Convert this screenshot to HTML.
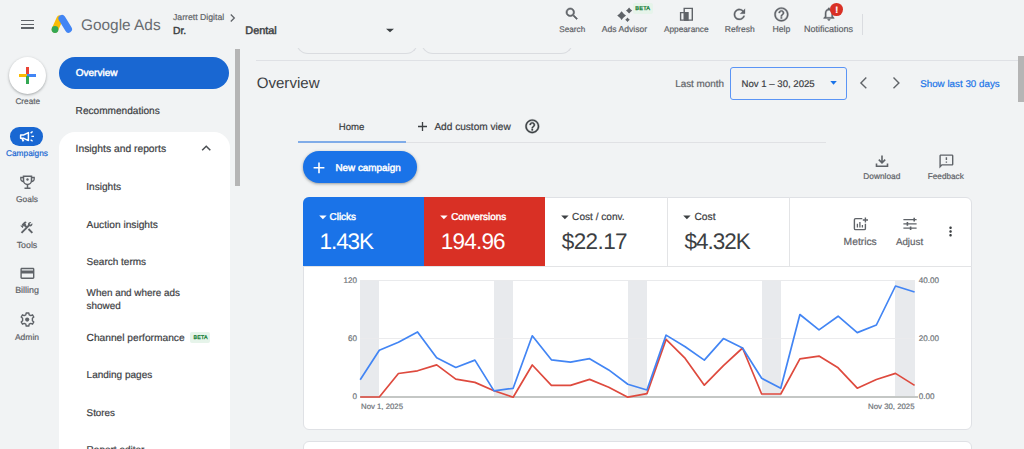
<!DOCTYPE html>
<html><head><meta charset="utf-8"><style>
html,body{margin:0;padding:0;}
body{width:1024px;height:449px;overflow:hidden;position:relative;background:#f1f3f4;font-family:"Liberation Sans",sans-serif;}
.t{position:absolute;white-space:nowrap;line-height:1;text-rendering:geometricPrecision;-webkit-text-stroke:0.2px currentColor;}
.b{position:absolute;}
</style></head><body>
<div class="b" style="left:296.2px;top:20px;width:121.8px;height:34px;border:1px solid #dadce0;border-top:none;border-radius:0 0 12px 12px;box-sizing:border-box;"></div>
<div class="b" style="left:421.2px;top:20px;width:151.5px;height:34px;border:1px solid #dadce0;border-top:none;border-radius:0 0 12px 12px;box-sizing:border-box;"></div>
<div class="b" style="left:0px;top:0px;width:1024px;height:48px;background:#f1f3f4;"></div>
<div class="b" style="left:256px;top:60.2px;width:762px;height:1.3px;background:#dfe1e5;"></div>
<div class="b" style="left:20.7px;top:19.6px;width:13px;height:1.4px;background:#5f6368;"></div>
<div class="b" style="left:20.7px;top:23.5px;width:13px;height:1.4px;background:#5f6368;"></div>
<div class="b" style="left:20.7px;top:27.3px;width:13px;height:1.4px;background:#5f6368;"></div>
<svg class="b" style="left:48px;top:10px" width="26" height="26" viewBox="0 0 26 26"><path d="M11.8 8.6 L7 19.4" stroke="#fbbc04" stroke-width="6.6" stroke-linecap="round"/>
<path d="M13.9 8.4 L20.5 19.2" stroke="#4285f4" stroke-width="7" stroke-linecap="round"/>
<circle cx="7" cy="19.5" r="3.4" fill="#34a853"/></svg>
<div class="t" style="left:81.00px;top:18.00px;font-size:15.4px;color:#686c70;-webkit-text-stroke:0;">Google Ads</div>
<div class="t" style="left:173.00px;top:13.00px;font-size:8.7px;color:#5f6368;">Jarrett Digital</div>
<svg class="b" style="left:229px;top:13px" width="8" height="10" viewBox="0 0 8 10"><path d="M1.8 1.5 L5.3 5 L1.8 8.5" fill="none" stroke="#5f6368" stroke-width="1.3"/></svg>
<div class="t" style="left:173.00px;top:27.00px;font-size:10.3px;color:#3c4043;-webkit-text-stroke:0.45px #3c4043;">Dr.</div>
<div class="t" style="left:245.30px;top:26.00px;font-size:10.9px;color:#3c4043;-webkit-text-stroke:0.45px #3c4043;">Dental</div>
<svg class="b" style="left:385px;top:28px" width="10" height="5" viewBox="0 0 10 5"><path d="M1 0.7 L9 0.7 L5 4.3 Z" fill="#3c4043"/></svg>
<svg class="b" style="left:564.00px;top:6.10px" width="15.84" height="15.84" viewBox="0 0 24 24"><path d="M15.5 14h-.79l-.28-.27A6.471 6.471 0 0 0 16 9.5 6.5 6.5 0 1 0 9.5 16c1.61 0 3.09-.59 4.23-1.57l.27.28v.79l5 4.99L20.49 19l-4.99-5zm-6 0C7.01 14 5 11.99 5 9.5S7.01 5 9.5 5 14 7.010 14 9.5 11.99 14 9.5 14z" fill="#5f6368" stroke="#5f6368" stroke-width="0.9"/></svg>
<div class="t" style="left:472.25px;width:200px;text-align:center;top:26.00px;font-size:8.2px;color:#5f6368;">Search</div>
<svg class="b" style="left:610px;top:0px" width="30" height="25" viewBox="0 0 30 25"><path d="M11.6 11.2 Q13.448 13.751999999999999 16.0 15.6 Q13.448 17.448 11.6 20.0 Q9.751999999999999 17.448 7.199999999999999 15.6 Q9.751999999999999 13.751999999999999 11.6 11.2 Z" fill="#5f6368"/><path d="M19.1 7.4 Q20.402 9.198 22.200000000000003 10.5 Q20.402 11.802 19.1 13.6 Q17.798000000000002 11.802 16.0 10.5 Q17.798000000000002 9.198 19.1 7.4 Z" fill="#5f6368"/><path d="M17.5 17.5 Q18.466 18.834 19.8 19.8 Q18.466 20.766000000000002 17.5 22.1 Q16.534 20.766000000000002 15.2 19.8 Q16.534 18.834 17.5 17.5 Z" fill="#5f6368"/></svg>
<div class="b" style="left:632.7px;top:3.1px;width:20.3px;height:10.5px;background:#e6f4ea;border-radius:2px;"></div>
<div class="t" style="left:542.80px;width:200px;text-align:center;top:7.00px;font-size:5.6px;color:#188038;letter-spacing:0.2px;-webkit-text-stroke:0.3px #188038;">BETA</div>
<div class="t" style="left:524.50px;width:200px;text-align:center;top:25.00px;font-size:8.6px;color:#5f6368;">Ads Advisor</div>
<svg class="b" style="left:679px;top:7px" width="16" height="16" viewBox="0 0 16 16"><path d="M1.6 5.6 L5.2 5.6 L5.2 13.1 L1.6 13.1 Z M5.2 1.4 L13.3 1.4 L13.3 13.1 L5.2 13.1 Z" fill="none" stroke="#5f6368" stroke-width="1.4"/><rect x="5" y="5" width="4.7" height="8.8" fill="#5f6368"/></svg>
<div class="t" style="left:586.25px;width:200px;text-align:center;top:25.00px;font-size:8.3px;color:#5f6368;">Appearance</div>
<svg class="b" style="left:731.40px;top:5.70px" width="16.80" height="16.80" viewBox="0 0 24 24"><path d="M17.65 6.35A7.958 7.958 0 0 0 12 4c-4.42 0-7.99 3.58-7.99 8s3.57 8 7.99 8c3.73 0 6.84-2.55 7.73-6h-2.08A5.99 5.99 0 0 1 12 18c-3.31 0-6-2.690-6-6s2.69-6 6-6c1.66 0 3.14.69 4.22 1.78L13 11h7V4l-2.35 2.350z" fill="#5f6368" stroke="#5f6368" stroke-width="0.4"/></svg>
<div class="t" style="left:639.75px;width:200px;text-align:center;top:25.00px;font-size:8.5px;color:#5f6368;">Refresh</div>
<svg class="b" style="left:773.10px;top:6.20px" width="16.80" height="16.80" viewBox="0 0 24 24"><path d="M11 18h2v-2h-2v2zm1-16C6.48 2 2 6.48 2 12s4.48 10 10 10 10-4.48 10-10S17.52 2 12 2zm0 18c-4.41 0-8-3.59-8-8s3.59-8 8-8 8 3.59 8 8-3.59 8-8 8zm0-14c-2.21 0-4 1.79-4 4h2c0-1.1.9-2 2-2s2 .9 2 2c0 2-3 1.75-3 5h2c0-2.25 3-2.5 3-5 0-2.21-1.79-4-4-4z" fill="#5f6368" stroke="#5f6368" stroke-width="0.5"/></svg>
<div class="t" style="left:681.40px;width:200px;text-align:center;top:25.00px;font-size:8.7px;color:#5f6368;">Help</div>
<svg class="b" style="left:820.70px;top:6.35px" width="15.84" height="15.84" viewBox="0 0 24 24"><path d="M12 22c1.1 0 2-.9 2-2h-4c0 1.1.9 2 2 2zm6-6v-5c0-3.07-1.630-5.64-4.5-6.32V4c0-.83-.67-1.5-1.5-1.5s-1.5.67-1.5 1.5v.68C7.64 5.36 6 7.92 6 11v5l-2 2v1h16v-1l-2-2zm-2 1H8v-6c0-2.48 1.51-4.5 4-4.5s4 2.02 4 4.5v6z" fill="#5f6368" stroke="#5f6368" stroke-width="0.5"/></svg>
<div class="b" style="left:830.3px;top:3px;width:12.8px;height:12.8px;background:#d93025;border-radius:50%;"></div>
<div class="t" style="left:736.70px;width:200px;text-align:center;top:6.00px;font-size:9px;color:#fff;font-weight:700;">!</div>
<div class="t" style="left:728.60px;width:200px;text-align:center;top:25.00px;font-size:9.0px;color:#5f6368;">Notifications</div>
<div class="b" style="left:862px;top:13.7px;width:1px;height:21.3px;background:#dadce0;"></div>
<div class="b" style="left:9.1px;top:57px;width:37px;height:37px;background:#fff;border-radius:50%;box-shadow:0 1px 3px rgba(60,64,67,.3),0 1px 2px rgba(60,64,67,.15);"></div>
<div class="b" style="left:26.1px;top:67.4px;width:2.6px;height:7.7px;background:#ea4335;"></div>
<div class="b" style="left:19.1px;top:74.0px;width:8.1px;height:2.7px;background:#fbbc04;"></div>
<div class="b" style="left:27.4px;top:74.0px;width:8.4px;height:2.7px;background:#4285f4;"></div>
<div class="b" style="left:26.1px;top:76.0px;width:2.6px;height:7.7px;background:#34a853;"></div>
<div class="t" style="left:-72.25px;width:200px;text-align:center;top:98.00px;font-size:8.2px;color:#5f6368;">Create</div>
<div class="b" style="left:10.4px;top:127.4px;width:33px;height:18.3px;background:#1967d2;border-radius:9.2px;"></div>
<svg class="b" style="left:10px;top:125px" width="34" height="22" viewBox="0 0 34 22"><path d="M10.6 9.9 L13.8 9.9 L18.4 7.6 L18.4 15.6 L13.8 13.3 L10.6 13.3 Z" fill="none" stroke="#fff" stroke-width="1.5" stroke-linejoin="round"/><path d="M12.2 13.5 L13.4 16.3" stroke="#fff" stroke-width="1.8"/><path d="M20.6 8.1 L22.6 6.5 M21.4 11.4 L24 11.4 M20.6 14.8 L22.6 16.3" stroke="#fff" stroke-width="1.4"/></svg>
<div class="t" style="left:-73.00px;width:200px;text-align:center;top:149.00px;font-size:8.3px;color:#1967d2;">Campaigns</div>
<svg class="b" style="left:19px;top:175px" width="17" height="15" viewBox="0 0 17 15"><path d="M4.5 1.2 L12.5 1.2 L12.5 5.5 A4 4 0 0 1 4.5 5.5 Z" fill="none" stroke="#5f6368" stroke-width="1.5"/><path d="M4.5 2.5 L1.8 2.5 L1.8 4 A2.5 2.5 0 0 0 4.5 6.5 M12.5 2.5 L15.2 2.5 L15.2 4 A2.5 2.5 0 0 1 12.5 6.5" fill="none" stroke="#5f6368" stroke-width="1.3"/><path d="M8.5 9.5 L8.5 12.5 M5.5 13.2 L11.5 13.2" stroke="#5f6368" stroke-width="1.5"/><circle cx="8.5" cy="4.5" r="1.2" fill="#5f6368"/></svg>
<div class="t" style="left:-73.00px;width:200px;text-align:center;top:195.00px;font-size:8.4px;color:#5f6368;">Goals</div>
<svg class="b" style="left:19.25px;top:220.00px" width="15.36" height="15.36" viewBox="0 0 24 24"><path d="M13.783 15.172l2.121-2.121 5.996 5.996-2.121 2.121zM17.5 10c1.93 0 3.5-1.570 3.5-3.5 0-.58-.16-1.12-.41-1.6l-2.7 2.7-1.49-1.49 2.7-2.7c-.48-.25-1.02-.41-1.6-.41C15.57 3 14 4.57 14 6.5c0 .41.08.8.21 1.16l-1.85 1.85-1.78-1.78.71-.71-1.41-1.41L12 3.49a3 3 0 0 0-4.240 0L4.22 7.03l1.41 1.41H2.81l-.71.71 3.54 3.54.71-.71V9.15l1.41 1.41.71-.71 1.78 1.78-7.41 7.41 2.12 2.12L16.34 9.79c.36.13.75.21 1.16.21z" fill="#5f6368"/></svg>
<div class="t" style="left:-73.00px;width:200px;text-align:center;top:241.00px;font-size:8.8px;color:#5f6368;">Tools</div>
<svg class="b" style="left:18.60px;top:265.20px" width="16.80" height="16.80" viewBox="0 0 24 24"><path d="M20 4H4c-1.11 0-1.99.89-1.99 2L2 18c0 1.11.89 2 2 2h16c1.11 0 2-.89 2-2V6c0-1.11-.89-2-2-2zm0 14H4v-6h16v6zm0-10H4V6h16v2z" fill="#5f6368"/></svg>
<div class="t" style="left:-73.00px;width:200px;text-align:center;top:286.00px;font-size:8.9px;color:#5f6368;">Billing</div>
<svg class="b" style="left:20px;top:312px" width="15" height="15" viewBox="0 0 15 15"><circle cx="7.2" cy="7.6" r="2.1" fill="#5f6368"/><path d="M6.2 1 L8.8 1 L9.2 2.8 L10.8 3.6 L12.5 2.8 L13.8 5 L12.4 6.3 L12.4 8.7 L13.8 10 L12.5 12.2 L10.8 11.4 L9.2 12.2 L8.8 14 L6.2 14 L5.8 12.2 L4.2 11.4 L2.5 12.2 L1.2 10 L2.6 8.7 L2.6 6.3 L1.2 5 L2.5 2.8 L4.2 3.6 L5.8 2.8 Z" fill="none" stroke="#5f6368" stroke-width="1.4" stroke-linejoin="round"/></svg>
<div class="t" style="left:-73.00px;width:200px;text-align:center;top:333.00px;font-size:8.5px;color:#5f6368;">Admin</div>
<div class="b" style="left:59.25px;top:57px;width:170px;height:31.75px;background:#1967d2;border-radius:16px;"></div>
<div class="t" style="left:75.75px;top:69.00px;font-size:10.0px;color:#fff;-webkit-text-stroke:0.45px #fff;">Overview</div>
<div class="t" style="left:75.60px;top:107.00px;font-size:10.1px;color:#3c4043;">Recommendations</div>
<div class="b" style="left:59.25px;top:132px;width:170.25px;height:330px;background:#fff;border-radius:16px 16px 0 0;"></div>
<div class="t" style="left:75.60px;top:145.00px;font-size:10.3px;color:#3c4043;">Insights and reports</div>
<svg class="b" style="left:197.20px;top:139.00px" width="18.48" height="18.48" viewBox="0 0 24 24"><path d="M12 8l-6 6 1.41 1.41L12 10.83l4.59 4.58L18 14z" fill="#4a4e52"/></svg>
<div class="t" style="left:86.30px;top:183.00px;font-size:10.1px;color:#3c4043;">Insights</div>
<div class="t" style="left:86.60px;top:221.00px;font-size:10.2px;color:#3c4043;">Auction insights</div>
<div class="t" style="left:86.60px;top:258.00px;font-size:10.0px;color:#3c4043;">Search terms</div>
<div class="t" style="left:86.60px;top:289.00px;font-size:9.9px;color:#3c4043;">When and where ads</div>
<div class="t" style="left:86.60px;top:302.00px;font-size:9.9px;color:#3c4043;">showed</div>
<div class="t" style="left:86.60px;top:334.00px;font-size:10.2px;color:#3c4043;">Channel performance</div>
<div class="b" style="left:190.3px;top:332.1px;width:20.1px;height:10.7px;background:#e6f4ea;border-radius:2px;"></div>
<div class="t" style="left:100.60px;width:200px;text-align:center;top:336.00px;font-size:5.3px;color:#188038;letter-spacing:0.2px;-webkit-text-stroke:0.3px #188038;">BETA</div>
<div class="t" style="left:86.60px;top:371.00px;font-size:10.0px;color:#3c4043;">Landing pages</div>
<div class="t" style="left:86.60px;top:409.00px;font-size:9.8px;color:#3c4043;">Stores</div>
<div class="t" style="left:86.60px;top:446.00px;font-size:10.0px;color:#3c4043;">Report editor</div>
<div class="b" style="left:234.8px;top:48.7px;width:5.2px;height:137.7px;background:#b5b5b5;"></div>
<div class="b" style="left:1018.4px;top:56.4px;width:5.6px;height:45.6px;background:#b5b5b5;"></div>
<div class="t" style="left:256.70px;top:76.00px;font-size:15.1px;color:#3c4043;-webkit-text-stroke:0;">Overview</div>
<div class="t" style="left:675.20px;top:80.00px;font-size:9.9px;color:#5f6368;">Last month</div>
<div class="b" style="left:729.6px;top:66.8px;width:117.6px;height:33.2px;border:1.5px solid #5a94f5;border-radius:3px;box-sizing:border-box;"></div>
<div class="t" style="left:741.60px;top:80.00px;font-size:9.6px;color:#3c4043;">Nov 1 – 30, 2025</div>
<svg class="b" style="left:829px;top:80px" width="9" height="6" viewBox="0 0 9 6"><path d="M1.3 1.1 L7.8 1.1 L4.55 4.8 Z" fill="#1a73e8"/></svg>
<svg class="b" style="left:858px;top:76px" width="11" height="14" viewBox="0 0 11 14"><path d="M8.3 1.6 L2.9 6.9 L8.3 12.2" fill="none" stroke="#606468" stroke-width="1.4"/></svg>
<svg class="b" style="left:891px;top:76px" width="11" height="14" viewBox="0 0 11 14"><path d="M2.5 1.6 L7.9 6.9 L2.5 12.2" fill="none" stroke="#606468" stroke-width="1.4"/></svg>
<div class="t" style="left:920.20px;top:80.00px;font-size:9.8px;color:#1a73e8;">Show last 30 days</div>
<div class="t" style="left:251.50px;width:200px;text-align:center;top:123.00px;font-size:9.6px;color:#3c4043;">Home</div>
<div class="b" style="left:297.6px;top:141px;width:108.4px;height:2px;background:#80ace8;"></div>
<div class="b" style="left:406px;top:141.5px;width:420px;height:1px;background:#e0e1e4;"></div>
<svg class="b" style="left:417px;top:121px" width="11" height="11" viewBox="0 0 11 11"><path d="M5.5 1 L5.5 10 M1 5.5 L10 5.5" stroke="#3c4043" stroke-width="1.3"/></svg>
<div class="t" style="left:434.40px;top:123.00px;font-size:10.1px;color:#3c4043;">Add custom view</div>
<svg class="b" style="left:524.40px;top:117.60px" width="16.56" height="16.56" viewBox="0 0 24 24"><path d="M11 18h2v-2h-2v2zm1-16C6.48 2 2 6.48 2 12s4.48 10 10 10 10-4.48 10-10S17.52 2 12 2zm0 18c-4.41 0-8-3.59-8-8s3.59-8 8-8 8 3.59 8 8-3.59 8-8 8zm0-14c-2.21 0-4 1.79-4 4h2c0-1.1.9-2 2-2s2 .9 2 2c0 2-3 1.75-3 5h2c0-2.25 3-2.5 3-5 0-2.21-1.79-4-4-4z" fill="#3c4043" stroke="#3c4043" stroke-width="0.5"/></svg>
<div class="b" style="left:302.9px;top:151.0px;width:114.6px;height:32.4px;background:#1a73e8;border-radius:16px;box-shadow:0 1px 2px rgba(60,64,67,.3),0 1px 3px 1px rgba(60,64,67,.15);"></div>
<svg class="b" style="left:312px;top:161px" width="14" height="14" viewBox="0 0 14 14"><path d="M7 1.5 L7 12.2 M1.6 6.8 L12.4 6.8" stroke="#fff" stroke-width="1.6"/></svg>
<div class="t" style="left:335.40px;top:164.00px;font-size:9.9px;color:#fff;-webkit-text-stroke:0.45px #fff;">New campaign</div>
<svg class="b" style="left:874px;top:154px" width="16" height="14" viewBox="0 0 16 14"><path d="M8 1.5 L8 8.5 M4.8 5.6 L8 8.8 L11.2 5.6" fill="none" stroke="#5f6368" stroke-width="1.6"/><path d="M2.5 9.5 L2.5 12.3 L13.5 12.3 L13.5 9.5" fill="none" stroke="#5f6368" stroke-width="1.6"/></svg>
<div class="t" style="left:781.80px;width:200px;text-align:center;top:172.00px;font-size:8.3px;color:#5f6368;">Download</div>
<svg class="b" style="left:937.80px;top:153.10px" width="16.80" height="16.80" viewBox="0 0 24 24"><path d="M20 2H4c-1.1 0-1.99.9-1.99 2L2 22l4-4h14c1.1 0 2-.9 2-2V4c0-1.1-.9-2-2-2zm0 14H5.17L4 17.17V4h16v12zM11 12h2v2h-2zm0-6h2v4h-2z" fill="#5f6368"/></svg>
<div class="t" style="left:845.80px;width:200px;text-align:center;top:173.00px;font-size:8.2px;color:#5f6368;">Feedback</div>
<div class="b" style="left:303.4px;top:197.4px;width:668.2px;height:233px;background:#fff;border:1px solid #dfe1e5;border-radius:6px;box-sizing:border-box;"></div>
<div class="b" style="left:303.4px;top:197.4px;width:120.2px;height:68.6px;background:#1a73e8;border-radius:6px 0 0 0;"></div>
<div class="b" style="left:423.6px;top:197.4px;width:121.3px;height:68.6px;background:#d93025;"></div>
<div class="b" style="left:303.4px;top:265.8px;width:668.2px;height:1px;background:#e3e4e6;"></div>
<div class="b" style="left:666.9px;top:197.4px;width:1px;height:68.6px;background:#e3e4e6;"></div>
<div class="b" style="left:788.8px;top:197.4px;width:1px;height:68.6px;background:#e3e4e6;"></div>
<svg class="b" style="left:318.8px;top:214.8px" width="8" height="5" viewBox="0 0 8 5"><path d="M0.2 0.5 L7.6 0.5 L3.9 4.3 Z" fill="#fff"/></svg>
<div class="t" style="left:329.60px;top:213.00px;font-size:9.9px;color:#fff;-webkit-text-stroke:0.45px #fff;">Clicks</div>
<div class="t" style="left:319.60px;top:231.00px;font-size:22.5px;color:#fff;letter-spacing:-1.1px;-webkit-text-stroke:0;">1.43K</div>
<svg class="b" style="left:439.6px;top:214.8px" width="8" height="5" viewBox="0 0 8 5"><path d="M0.2 0.5 L7.6 0.5 L3.9 4.3 Z" fill="#fff"/></svg>
<div class="t" style="left:451.20px;top:213.00px;font-size:9.9px;color:#fff;-webkit-text-stroke:0.45px #fff;">Conversions</div>
<div class="t" style="left:440.80px;top:231.00px;font-size:22.5px;color:#fff;letter-spacing:-0.8px;-webkit-text-stroke:0;">194.96</div>
<svg class="b" style="left:561px;top:214.8px" width="8" height="5" viewBox="0 0 8 5"><path d="M0.2 0.5 L7.6 0.5 L3.9 4.3 Z" fill="#3c4043"/></svg>
<div class="t" style="left:572.10px;top:213.00px;font-size:10.1px;color:#3c4043;">Cost / conv.</div>
<div class="t" style="left:561.80px;top:231.00px;font-size:22.5px;color:#3c4043;letter-spacing:-0.6px;-webkit-text-stroke:0;">$22.17</div>
<svg class="b" style="left:683.3px;top:214.8px" width="8" height="5" viewBox="0 0 8 5"><path d="M0.2 0.5 L7.6 0.5 L3.9 4.3 Z" fill="#3c4043"/></svg>
<div class="t" style="left:694.40px;top:213.00px;font-size:10.3px;color:#3c4043;">Cost</div>
<div class="t" style="left:684.50px;top:231.00px;font-size:22.5px;color:#3c4043;letter-spacing:-1.0px;-webkit-text-stroke:0;">$4.32K</div>
<svg class="b" style="left:853px;top:217px" width="16" height="14" viewBox="0 0 16 14"><path d="M9.3 1.6 L2.6 1.6 Q1.4 1.6 1.4 2.8 L1.4 11.4 Q1.4 12.6 2.6 12.6 L11.2 12.6 Q12.4 12.6 12.4 11.4 L12.4 6.8" fill="none" stroke="#5f6368" stroke-width="1.4"/><path d="M4.4 6.8 L4.4 10.6 M6.9 5 L6.9 10.6 M9.4 8 L9.4 10.6" stroke="#5f6368" stroke-width="1.3"/><path d="M12.4 0.4 L12.4 5.6 M9.8 3 L15 3" stroke="#5f6368" stroke-width="1.4"/></svg>
<div class="t" style="left:760.20px;width:200px;text-align:center;top:238.00px;font-size:10.3px;color:#5f6368;">Metrics</div>
<svg class="b" style="left:902px;top:217px" width="16" height="14" viewBox="0 0 16 14"><path d="M1.4 2.6 L14.6 2.6 M1.4 6.9 L14.6 6.9 M1.4 11.2 L14.6 11.2" stroke="#5f6368" stroke-width="1.2"/><path d="M12.2 0.8 L12.2 4.4 M5.4 5.1 L5.4 8.7 M8.6 9.4 L8.6 13" stroke="#5f6368" stroke-width="1.6"/></svg>
<div class="t" style="left:809.50px;width:200px;text-align:center;top:238.00px;font-size:9.8px;color:#5f6368;">Adjust</div>
<svg class="b" style="left:942.90px;top:224.10px" width="15.12" height="15.12" viewBox="0 0 24 24"><path d="M12 8c1.1 0 2-.9 2-2s-.9-2-2-2-2 .9-2 2 .9 2 2 2zm0 2c-1.1 0-2 .9-2 2s.9 2 2 2 2-.9 2-2-.9-2-2-2zm0 6c-1.1 0-2 .9-2 2s.9 2 2 2 2-.9 2-2-.9-2-2-2z" fill="#3c4043"/></svg>
<div class="b" style="left:360.2px;top:280.2px;width:19.12px;height:116.80000000000001px;background:#e8eaed;"></div>
<div class="b" style="left:494.02px;top:280.2px;width:19.12px;height:116.80000000000001px;background:#e8eaed;"></div>
<div class="b" style="left:627.84px;top:280.2px;width:19.12px;height:116.80000000000001px;background:#e8eaed;"></div>
<div class="b" style="left:761.66px;top:280.2px;width:19.12px;height:116.80000000000001px;background:#e8eaed;"></div>
<div class="b" style="left:895.48px;top:280.2px;width:19.12px;height:116.80000000000001px;background:#e8eaed;"></div>
<div class="b" style="left:360.2px;top:279.59999999999997px;width:554.4000000000001px;height:1.3px;background:#e9eaec;"></div>
<div class="b" style="left:360.2px;top:337.9px;width:554.4000000000001px;height:1.3px;background:#ebebed;"></div>
<div class="b" style="left:360.2px;top:396.2px;width:557.4000000000001px;height:2px;background:#c4c7c5;"></div>
<div class="t" style="left:57.00px;width:300px;text-align:right;top:277.00px;font-size:8.1px;color:#70757a;">120</div>
<div class="t" style="left:57.00px;width:300px;text-align:right;top:335.00px;font-size:8.1px;color:#70757a;">60</div>
<div class="t" style="left:57.00px;width:300px;text-align:right;top:393.00px;font-size:8.1px;color:#70757a;">0</div>
<div class="t" style="left:918.70px;top:277.00px;font-size:8.1px;color:#70757a;">40.00</div>
<div class="t" style="left:918.70px;top:335.00px;font-size:8.1px;color:#70757a;">20.00</div>
<div class="t" style="left:918.70px;top:393.00px;font-size:8.1px;color:#70757a;">0.00</div>
<div class="t" style="left:361.00px;top:403.00px;font-size:7.8px;color:#70757a;">Nov 1, 2025</div>
<div class="t" style="left:614.50px;width:300px;text-align:right;top:403.00px;font-size:7.8px;color:#70757a;">Nov 30, 2025</div>
<svg class="b" style="left:0;top:0" width="1024" height="449"><polyline points="360.20,397.00 379.32,397.00 398.43,373.50 417.55,370.80 436.67,364.90 455.79,379.10 474.90,382.40 494.02,390.80 513.14,397.20 532.26,365.00 551.37,385.40 570.49,385.40 589.61,379.40 608.72,387.20 627.84,397.20 646.96,393.60 666.08,339.40 685.19,358.40 704.31,385.20 723.43,365.60 742.54,348.00 761.66,394.00 780.78,394.00 799.90,358.80 819.01,356.10 838.13,367.80 857.25,388.20 876.37,379.50 895.48,373.40 914.60,385.40" fill="none" stroke="#de4a3e" stroke-width="1.7" stroke-linejoin="round"/><polyline points="360.20,379.70 379.32,350.30 398.43,342.30 417.55,331.90 436.67,357.80 455.79,367.50 474.90,360.10 494.02,390.90 513.14,388.30 532.26,335.80 551.37,359.80 570.49,362.20 589.61,358.70 608.72,369.90 627.84,384.20 646.96,390.00 666.08,335.10 685.19,346.80 704.31,360.10 723.43,338.60 742.54,348.00 761.66,378.30 780.78,388.30 799.90,314.50 819.01,329.90 838.13,316.20 857.25,332.60 876.37,325.00 895.48,286.00 914.60,292.00" fill="none" stroke="#4285f4" stroke-width="1.7" stroke-linejoin="round"/></svg>
<div class="b" style="left:303.4px;top:441.2px;width:668.2px;height:30px;background:#fff;border:1px solid #dfe1e5;border-radius:6px;box-sizing:border-box;"></div>
</body></html>
